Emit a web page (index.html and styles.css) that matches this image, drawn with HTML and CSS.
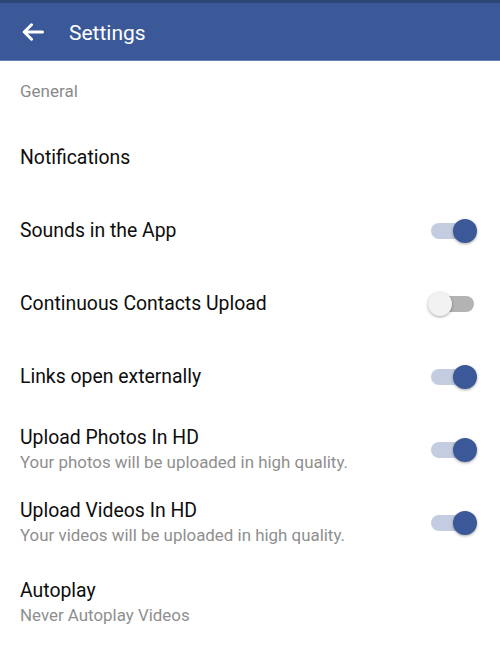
FILE: index.html
```html
<!DOCTYPE html>
<html lang="en">
<head>
    <meta charset="UTF-8">
    <meta name="viewport" content="width=device-width, initial-scale=1.0">
    <title>Settings</title>
    <link rel="stylesheet" href="styles.css">
</head>
<body>
    <div class="status-strip"></div>
    <header class="app-bar">
        <svg class="back-icon" width="22" height="18" viewBox="0 0 22 18">
            <path d="M20.5 9H2.5M9.5 1.8L2.2 9l7.3 7.2" fill="none" stroke="#fff" stroke-width="3" stroke-linecap="round" stroke-linejoin="round"/>
        </svg>
        <span class="app-title">Settings</span>
    </header>

    <div class="section-label">General</div>

    <div class="row">
        <div class="row-text"><div class="row-title">Notifications</div></div>
    </div>

    <div class="row">
        <div class="row-text"><div class="row-title">Sounds in the App</div></div>
        <div class="switch on"><span class="track"></span><span class="thumb"></span></div>
    </div>

    <div class="row">
        <div class="row-text"><div class="row-title">Continuous Contacts Upload</div></div>
        <div class="switch"><span class="track"></span><span class="thumb"></span></div>
    </div>

    <div class="row">
        <div class="row-text"><div class="row-title">Links open externally</div></div>
        <div class="switch on"><span class="track"></span><span class="thumb"></span></div>
    </div>

    <div class="row">
        <div class="row-text">
            <div class="row-title">Upload Photos In HD</div>
            <div class="row-sub">Your photos will be uploaded in high quality.</div>
        </div>
        <div class="switch on"><span class="track"></span><span class="thumb"></span></div>
    </div>

    <div class="row">
        <div class="row-text">
            <div class="row-title">Upload Videos In HD</div>
            <div class="row-sub">Your videos will be uploaded in high quality.</div>
        </div>
        <div class="switch on"><span class="track"></span><span class="thumb"></span></div>
    </div>

    <div class="row row-last">
        <div class="row-text">
            <div class="row-title">Autoplay</div>
            <div class="row-sub">Never Autoplay Videos</div>
        </div>
    </div>
</body>
</html>
```

FILE: styles.css
```css
body {
    margin: 0;
    font-family: Roboto, "Noto Sans", Arial, sans-serif;
    background: #fff;
    color: #111;
}
.status-strip {
    height: 3px;
    background: #2e4677;
}
.app-bar {
    display: flex;
    align-items: center;
    height: 57px;
    padding-left: 22px;
    background: #3b5998;
    border-bottom: 1px solid #6a82b5;
}
.back-icon {
    display: block;
    margin-right: 25px;
    margin-top: 1px;
}
.app-title {
    color: #fff;
    font-size: 21px;
    padding-top: 2px;
}
.section-label {
    display: flex;
    align-items: center;
    height: 60px;
    padding-left: 20px;
    color: #8a8a8a;
    font-size: 17px;
}
.row {
    display: flex;
    align-items: center;
    justify-content: space-between;
    height: 73px;
    padding: 0 23px 0 20px;
}
.row-last {
    margin-top: 7px;
}
.row-title {
    font-size: 19.4px;
    line-height: 24px;
    color: #0d0d0d;
}
.row-sub {
    font-size: 16.9px;
    line-height: 24px;
    color: #8f8f8f;
}
.switch {
    position: relative;
    width: 49px;
    height: 24px;
    flex-shrink: 0;
}
.track {
    position: absolute;
    left: 3px;
    right: 3px;
    top: 4px;
    height: 16px;
    border-radius: 8px;
    background: #b3b3b3;
}
.thumb {
    position: absolute;
    top: 0;
    left: 0;
    width: 24px;
    height: 24px;
    border-radius: 50%;
    background: #f2f2f2;
    box-shadow: 0 1px 3px rgba(0, 0, 0, 0.35);
}
.switch.on .track {
    background: #c3cce0;
}
.switch.on .thumb {
    left: auto;
    right: 0;
    background: #3b5998;
}
```
